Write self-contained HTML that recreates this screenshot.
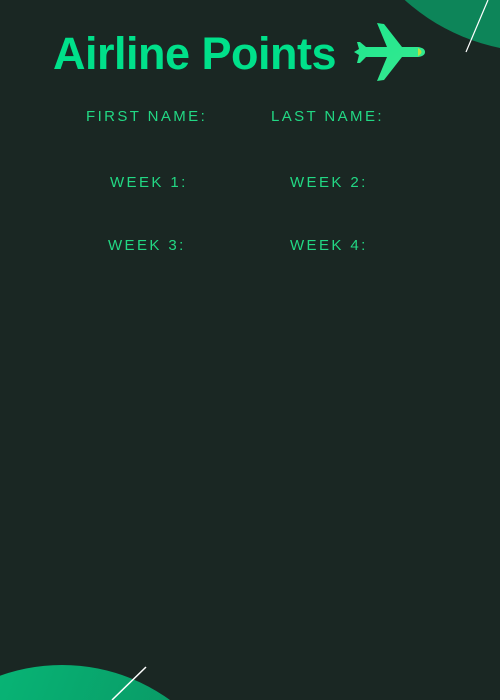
<!DOCTYPE html>
<html><head><meta charset="utf-8"><style>
html,body{margin:0;padding:0;overflow:hidden;width:500px;height:700px}
body{background:#1a2723;position:relative;overflow:hidden;font-family:"Liberation Sans",sans-serif}
svg{display:block}
.t{position:absolute;left:53px;top:29px;font-size:45px;line-height:50px;font-weight:bold;color:#00e08a;letter-spacing:-0.5px;white-space:nowrap}
.l{position:absolute;font-size:15px;line-height:18px;color:#22d884;letter-spacing:2.4px;white-space:nowrap}
</style></head><body>
<svg width="500" height="700" style="position:absolute;left:0;top:0">
<defs><linearGradient id="g" x1="0" y1="0" x2="1" y2="0.4"><stop offset="0" stop-color="#06c47e"/><stop offset="1" stop-color="#0b8c5e"/></linearGradient>
<linearGradient id="p" x1="0" y1="0" x2="1" y2="1"><stop offset="0" stop-color="#1ee88e"/><stop offset="1" stop-color="#38e890"/></linearGradient></defs>
<circle cx="540" cy="-150" r="202" fill="#0d8559"/>
<line x1="488" y1="0" x2="466" y2="52" stroke="#fff" stroke-width="1.2"/>
<circle cx="62" cy="849" r="184" fill="url(#g)"/>
<line x1="146" y1="667" x2="112" y2="700" stroke="#fff" stroke-width="1.5"/>
<g fill="url(#p)">
<path d="M377 23 L384 24 L402 47 L418 47 Q425 48 425 52 Q425 56 418 57 L402 57 L384 80 L377 81 L387 57 L366 57 L360 63 L357 63 L359 55 L354 52 L359 49 L357 42 L360 42 L366 47 L387 47 Z"/>
</g>
<path d="M418 48 Q425 52 418 56 Z" fill="#b8e040"/>
</svg>
<div class="t">Airline Points</div>
<div class="l" style="left:86px;top:108px">FIRST NAME:</div>
<div class="l" style="left:271px;top:108px">LAST NAME:</div>
<div class="l" style="left:110px;top:174px">WEEK 1:</div>
<div class="l" style="left:290px;top:174px">WEEK 2:</div>
<div class="l" style="left:108px;top:237px">WEEK 3:</div>
<div class="l" style="left:290px;top:237px">WEEK 4:</div>
</body></html>
